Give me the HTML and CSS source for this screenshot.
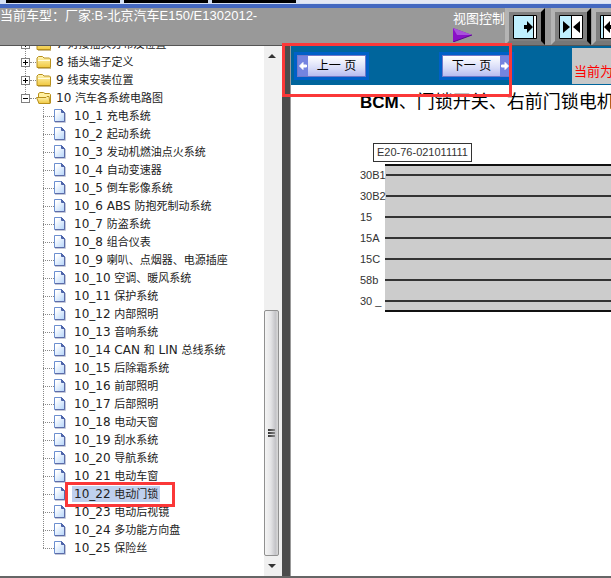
FILE: index.html
```html
<!DOCTYPE html>
<html lang="zh-CN">
<head>
<meta charset="utf-8">
<title>汽车各系统电路图</title>
<link rel="stylesheet" href="styles.css">
</head>
<body>
<svg class="defs" aria-hidden="true">
  <defs>
    <linearGradient id="gold" x1="0" y1="0" x2="0" y2="1"><stop offset="0" stop-color="#fff6b8"/><stop offset="1" stop-color="#f0c840"/></linearGradient>
    <linearGradient id="paper" x1="0" y1="0" x2="1" y2="1"><stop offset="0.2" stop-color="#ffffff"/><stop offset="1" stop-color="#b4d4fa"/></linearGradient>
    <symbol id="folder" viewBox="0 0 16 14">
      <path d="M1 12.500V3L2.500 1.500H6.500L8 3H13.500L14.500 4V12.500Z" fill="url(#gold)" stroke="#b8901c"/>
      <path d="M2 5.500H14" stroke="#fffbe0"/>
      <path d="M2 13.500H15" stroke="#9a7a20" opacity=".5"/>
    </symbol>
    <symbol id="folder-open" viewBox="0 0 16 14">
      <path d="M2.500 12V2.500L4 1.500H7.500L9 2.500H13.500L14.500 3.500V12Z" fill="#fff0a0" stroke="#b8901c"/>
      <path d="M0.500 6.500H10L11 5.500H13L14 12.500H3Z" fill="url(#gold)" stroke="#b8901c"/>
    </symbol>
    <symbol id="file" viewBox="0 0 12 14">
      <path d="M0.500 0.500H7.500L10.500 3.500V12.500H0.500Z" fill="url(#paper)" stroke="#6c8fd0"/>
      <path d="M7.500 0.500V3.500H10.500Z" fill="#5068b0" stroke="#4c62a8"/>
      <path d="M10.500 4V12.500H1" fill="none" stroke="#5c6ca8"/>
      <path d="M11.500 4V13.500H1" fill="none" stroke="#c4c8d8"/>
    </symbol>
  </defs>
</svg>

<div class="tabs" aria-hidden="true"><i></i><i></i><i></i><i></i></div>

<header class="header">
  <h1 class="model">当前车型：厂家:B-北京汽车E150/E1302012-</h1>
  <div class="view">
    <span>视图控制</span>
    <svg class="play" viewBox="0 0 19 14" aria-hidden="true"><path d="M0 0L19 7L0 14Z" fill="#8a10c8"/><path d="M0 0L19 7H4Z" fill="#a850dc"/><path d="M0 14L19 7" stroke="#5a0890"/></svg>
  </div>
  <div class="view-buttons">
    <button class="view-btn wide" type="button" aria-label="展开左侧">
      <svg viewBox="0 0 24 24"><path d="M.5.500H23.500V23.500H.5Z" fill="#c0f0ff" stroke="#000"/><path d="M21 1H23V23H21Z" fill="#fff"/><path d="M20.500 1V23" stroke="#000"/><path d="M11 10H14V6L20 12L14 18V14H11Z"/></svg>
    </button>
    <button class="view-btn" type="button" aria-label="居中">
      <svg viewBox="0 0 24 24"><path d="M.5.500H23.500V23.500H.5Z" fill="#fff" stroke="#000"/><path d="M1 1H12V23H1Z" fill="#c0f0ff"/><path d="M12.500 1V23" stroke="#000"/><path d="M4 6L11 12L4 18ZM21 6L14 12L21 18Z"/></svg>
    </button>
    <button class="view-btn" type="button" aria-label="展开右侧">
      <svg viewBox="0 0 24 24"><path d="M.5.500H23.500V23.500H.5Z" fill="#fff" stroke="#000"/><path d="M1 1H3V23H1Z" fill="#c0f0ff"/><path d="M3.500 1V23" stroke="#000"/><path d="M13 10H10V6L4 12L10 18V14H13Z"/></svg>
    </button>
  </div>
</header>

<div class="panes">
  <nav class="tree-pane">
    <ul class="tree">
      <li><div class="row"><button class="toggle" type="button" aria-label="展开"></button><svg class="folder"><use href="#folder"/></svg><a href="#"><b>7 </b>对接插头分布及位置</a></div></li>
      <li><div class="row"><button class="toggle" type="button" aria-label="展开"></button><svg class="folder"><use href="#folder"/></svg><a href="#"><b>8 </b>插头端子定义</a></div></li>
      <li><div class="row"><button class="toggle" type="button" aria-label="展开"></button><svg class="folder"><use href="#folder"/></svg><a href="#"><b>9 </b>线束安装位置</a></div></li>
      <li><div class="row last"><button class="toggle open" type="button" aria-label="收起"></button><svg class="folder"><use href="#folder-open"/></svg><a href="#"><b>10 </b>汽车各系统电路图</a></div>
        <ul class="files">
          <li><svg><use href="#file"/></svg><a href="#"><b>10_1 </b>充电系统</a></li>
          <li><svg><use href="#file"/></svg><a href="#"><b>10_2 </b>起动系统</a></li>
          <li><svg><use href="#file"/></svg><a href="#"><b>10_3 </b>发动机燃油点火系统</a></li>
          <li><svg><use href="#file"/></svg><a href="#"><b>10_4 </b>自动变速器</a></li>
          <li><svg><use href="#file"/></svg><a href="#"><b>10_5 </b>倒车影像系统</a></li>
          <li><svg><use href="#file"/></svg><a href="#"><b>10_6 ABS </b>防抱死制动系统</a></li>
          <li><svg><use href="#file"/></svg><a href="#"><b>10_7 </b>防盗系统</a></li>
          <li><svg><use href="#file"/></svg><a href="#"><b>10_8 </b>组合仪表</a></li>
          <li><svg><use href="#file"/></svg><a href="#"><b>10_9 </b>喇叭、点烟器、电源插座</a></li>
          <li><svg><use href="#file"/></svg><a href="#"><b>10_10 </b>空调、暖风系统</a></li>
          <li><svg><use href="#file"/></svg><a href="#"><b>10_11 </b>保护系统</a></li>
          <li><svg><use href="#file"/></svg><a href="#"><b>10_12 </b>内部照明</a></li>
          <li><svg><use href="#file"/></svg><a href="#"><b>10_13 </b>音响系统</a></li>
          <li><svg><use href="#file"/></svg><a href="#"><b>10_14 CAN </b>和<b> LIN </b>总线系统</a></li>
          <li><svg><use href="#file"/></svg><a href="#"><b>10_15 </b>后除霜系统</a></li>
          <li><svg><use href="#file"/></svg><a href="#"><b>10_16 </b>前部照明</a></li>
          <li><svg><use href="#file"/></svg><a href="#"><b>10_17 </b>后部照明</a></li>
          <li><svg><use href="#file"/></svg><a href="#"><b>10_18 </b>电动天窗</a></li>
          <li><svg><use href="#file"/></svg><a href="#"><b>10_19 </b>刮水系统</a></li>
          <li><svg><use href="#file"/></svg><a href="#"><b>10_20 </b>导航系统</a></li>
          <li><svg><use href="#file"/></svg><a href="#"><b>10_21 </b>电动车窗</a></li>
          <li class="selected"><svg><use href="#file"/></svg><a href="#"><b>10_22 </b>电动门锁</a></li>
          <li><svg><use href="#file"/></svg><a href="#"><b>10_23 </b>电动后视镜</a></li>
          <li><svg><use href="#file"/></svg><a href="#"><b>10_24 </b>多功能方向盘</a></li>
          <li><svg><use href="#file"/></svg><a href="#"><b>10_25 </b>保险丝</a></li>
        </ul>
      </li>
    </ul>
    <div class="scrollbar" aria-hidden="true">
      <svg viewBox="0 0 16 20"><path d="M4 12L8 8L12 12Z" fill="#333"/></svg>
      <div class="track"></div>
      <div class="thumb"><i></i><i></i><i></i></div>
      <svg viewBox="0 0 16 20"><path d="M4 8H12L8 12Z" fill="#333"/></svg>
    </div>
  </nav>

  <div class="divider"></div>

  <main class="content">
    <div class="pager">
      <button class="page-btn" type="button">
        <svg viewBox="0 0 10 20" aria-hidden="true"><path d="M0 0H10V20H0Z" fill="#7484e0"/><path d="M1.500 10L5 6.500V9H8.500V11H5V13.500Z" fill="#fff" stroke="#fff"/></svg>
        <span>上一 页</span>
      </button>
      <button class="page-btn" type="button">
        <span>下一 页</span>
        <svg viewBox="0 0 10 20" aria-hidden="true"><path d="M0 0H10V20H0Z" fill="#7484e0"/><path d="M8.500 10L5 6.500V9H1.500V11H5V13.500Z" fill="#fff" stroke="#fff"/></svg>
      </button>
      <div class="current">当前为</div>
    </div>
    <h2 class="title"><b>BCM</b>、门锁开关、右前门锁电机</h2>
    <section class="diagram">
      <div class="code">E20-76-021011111</div>
      <ul class="bus">
        <li><span>30B1</span></li>
        <li><span>30B2</span></li>
        <li><span>15</span></li>
        <li><span>15A</span></li>
        <li><span>15C</span></li>
        <li><span>58b</span></li>
        <li><span>30 _</span></li>
      </ul>
    </section>
    <div class="mark"></div>
  </main>
</div>
</body>
</html>
```
FILE: styles.css
```css
*,
*::before,
*::after {
  box-sizing: border-box;
}

body {
  margin: 0;
  height: 100vh;
  display: flex;
  flex-direction: column;
  overflow: hidden;
  background: #fff;
  color: #222;
  font: 13px/18px "Liberation Sans", "Noto Sans CJK SC", sans-serif;
}

ul {
  list-style: none;
  margin: 0;
  padding: 0;
}

h1,
h2 {
  margin: 0;
  font-weight: normal;
}

button {
  padding: 0;
  border: 0;
  font: inherit;
}

.defs {
  position: absolute;
  width: 0;
  height: 0;
}

/* Window tabs above the header */
.tabs {
  flex: none;
  display: flex;
  gap: 4px;
  height: 8px;
  border-bottom: 4px solid #4468c0;
  background: #d4e0f4;
}

.tabs i {
  width: 84px;
  height: 3px;
  background: #000;
}

.tabs i:first-child {
  margin-left: 6px;
  width: 114px;
}

.tabs i:last-child {
  flex: 1;
  background: #e4e8f4;
}

/* Header */
.header {
  flex: none;
  display: flex;
  height: 38px;
  background: #999;
  border-bottom: 1px solid #555;
  color: #fff;
  overflow: hidden;
}

.model {
  flex: 0 0 453px;
  font-size: 13px;
  line-height: 16px;
  white-space: nowrap;
}

.view {
  flex: 0 0 52px;
  padding-top: 2px;
  white-space: nowrap;
}

.view span,
.play {
  display: block;
}

.play {
  width: 19px;
  height: 14px;
}

.view-buttons {
  display: flex;
  gap: 1px;
}

.view-btn {
  flex: none;
  display: grid;
  place-items: center;
  width: 40px;
  height: 37px;
  background: #808080;
  border: 4px solid;
  border-color: #b0b0b0 #000 #777 #b4b4b4;
}

.view-btn.wide {
  margin-right: 5px;
}

.view-btn svg {
  width: 24px;
  height: 24px;
}

/* Panes */
.panes {
  flex: 1;
  display: flex;
  min-height: 0;
  border-bottom: 2px solid #666;
}

.tree-pane {
  flex: 0 0 282px;
  display: flex;
  overflow: hidden;
  background: #fff;
}

.divider {
  flex: 0 0 9px;
  background: #4c4c4c;
  border-right: 1px solid #999;
}

/* Tree */
.tree {
  flex: 1;
  margin-top: -11px;
  font-size: 11px;
}

.tree b {
  font: 12px/18px "DejaVu Sans", sans-serif;
  white-space: pre;
}

.tree a {
  color: #222;
  text-decoration: none;
  white-space: nowrap;
  line-height: 16px;
  height: 16px;
  display: flex;
  align-items: center;
}

.row {
  display: flex;
  align-items: center;
  height: 18px;
  padding-left: 21px;
  background: repeating-linear-gradient(#888 0 1px, #fff 1px 2px) 25px 0 / 1px 100% no-repeat;
}

.row.last {
  background-size: 1px 50%;
}

.row::before {
  content: "";
  order: 1;
  width: 6px;
  border-top: 1px dotted #888;
}

.folder {
  order: 2;
  width: 16px;
  height: 14px;
  margin-right: 4px;
}

.row a {
  order: 3;
}

.toggle {
  width: 9px;
  height: 9px;
  border: 1px solid #808080;
  background: linear-gradient(#000, #000) center / 5px 1px no-repeat,
    linear-gradient(#000, #000) center / 1px 5px no-repeat, #fff;
}

.toggle.open {
  background: linear-gradient(#000, #000) center / 5px 1px no-repeat, #fff;
}

.files li {
  position: relative;
  display: flex;
  align-items: center;
  height: 18px;
  padding-left: 43px;
  background: repeating-linear-gradient(#888 0 1px, #fff 1px 2px) 43px 0 / 1px 100% no-repeat;
}

.files li:last-child {
  background-size: 1px 50%;
}

.files li::before {
  content: "";
  width: 11px;
  border-top: 1px dotted #888;
}

.files svg {
  width: 12px;
  height: 14px;
  margin-right: 6px;
}

.files a {
  padding: 0 2px;
}

.selected a {
  background: #bfd0ee;
}

.mark,
.selected::after {
  content: "";
  position: absolute;
  border: 3px solid #fb3838;
  pointer-events: none;
}

.selected::after {
  left: 65px;
  top: -3px;
  width: 110px;
  height: 25px;
  z-index: 1;
}

/* Scrollbar */
.scrollbar {
  flex: 0 0 18px;
  display: flex;
  flex-direction: column;
  padding-right: 2px;
  background: #f0f0f0;
}

.scrollbar svg {
  flex: none;
  width: 16px;
  height: 20px;
}

.track {
  flex: 1;
}

.thumb {
  flex: 1;
  display: flex;
  flex-direction: column;
  align-items: center;
  justify-content: center;
  gap: 1px;
  margin-right: 1px;
  border: 1px solid #909090;
  border-radius: 2px;
  background: linear-gradient(90deg, #f4f4f4, #e4e4e6 45%, #c4c4c8 80%, #d8d8d8);
}

.thumb i {
  width: 7px;
  height: 2px;
  background: linear-gradient(90deg, #333, #888);
}

/* Content */
.content {
  position: relative;
  flex: 1;
  min-width: 0;
}

.pager {
  display: grid;
  grid-template-columns: 145px 133px 1fr;
  align-items: center;
  height: 39px;
  padding-left: 3px;
  background: #00659c;
}

.page-btn {
  display: flex;
  align-items: center;
  width: 75px;
  height: 28px;
  padding: 1px;
  border: 3px solid #0060c8;
  background: linear-gradient(#fff, #d8dcf8 60%, #b8bcf0) content-box, #7078c8;
  color: #000;
  font-size: 12px;
}

.page-btn span {
  flex: 1;
  text-align: center;
}

.page-btn svg {
  width: 10px;
  height: 20px;
}

.current {
  height: 36px;
  padding: 15px 0 0 2px;
  background: #c8c8c8;
  color: #f00;
  white-space: nowrap;
}

.title {
  margin: 5px 0 0 69px;
  font-size: 18px;
  line-height: 24px;
  color: #000;
  white-space: nowrap;
}

.title b {
  font-size: 17px;
}

.mark {
  left: -9px;
  top: -3px;
  width: 230px;
  height: 54px;
}

/* Wiring diagram */
.diagram {
  margin: 28px 0 0 69px;
  font-size: 11px;
  color: #333;
}

.code {
  width: max-content;
  margin-left: 13px;
  padding: 0 3px;
  border: 1px solid #333;
  line-height: 17px;
}

.bus {
  margin-top: 2px;
  padding-bottom: 1px;
  background: linear-gradient(#111, #111) 25px 0 / 100% 2px no-repeat,
    linear-gradient(#111, #111) 25px 100% / 100% 2px no-repeat,
    linear-gradient(#ccc, #ccc) 25px 0 / 100% 100% no-repeat;
}

.bus li {
  display: flex;
  align-items: center;
  height: 21px;
}

.bus span {
  flex: 0 0 25px;
  white-space: nowrap;
}

.bus li::after {
  content: "";
  flex: 1;
  height: 2px;
  background: #333;
}
```
